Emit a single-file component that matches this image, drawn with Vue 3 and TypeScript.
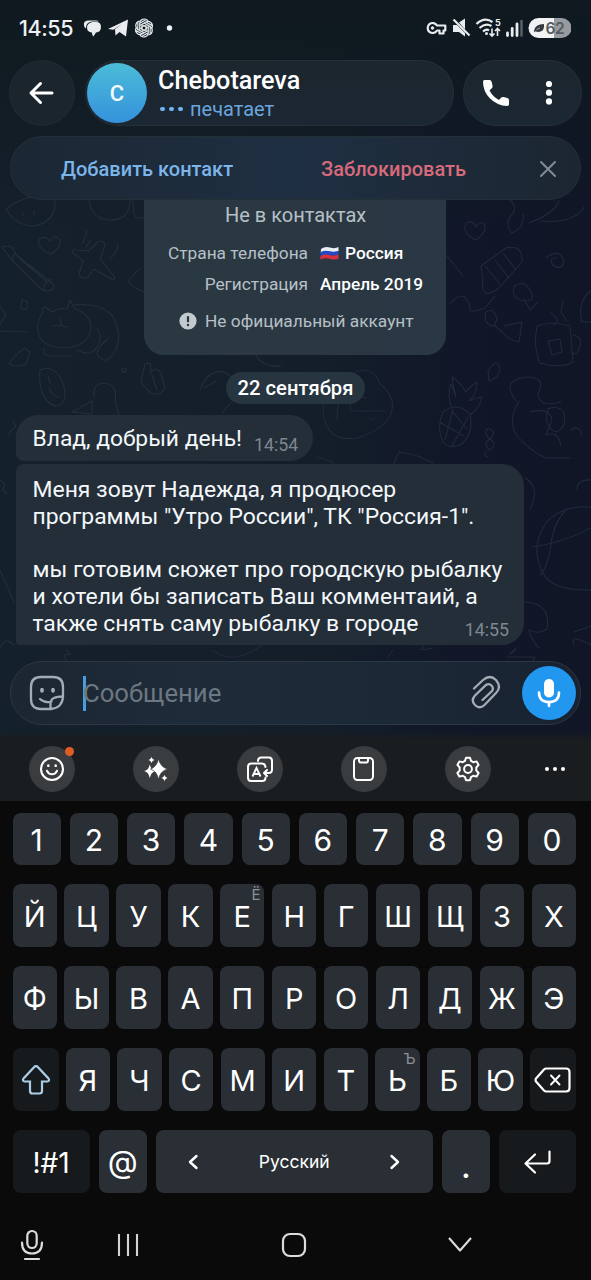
<script setup lang="ts">
interface Key { label: string; hint?: string }

const digits: string[] = [...'1234567890']
const rowTop: Key[] = [...'ЙЦУКЕНГШЩЗХ'].map((label) => ({ label, hint: label === 'Е' ? 'Ё' : undefined }))
const rowHome: Key[] = [...'ФЫВАПРОЛДЖЭ'].map((label) => ({ label }))
const rowBottom: Key[] = [...'ЯЧСМИТЬБЮ'].map((label) => ({ label, hint: label === 'Ь' ? 'Ъ' : undefined }))
const letterRows: Key[][] = [rowTop, rowHome]
const petals: number[] = [0, 60, 120, 180, 240, 300]
</script>

<template>
  <div class="phone">
    <svg class="wallpaper" viewBox="0 0 591 740" width="591" height="740" aria-hidden="true">
      <g>
        <!-- bowl and leaves -->
        <path d="M6 209q24-19 49-9q1 22-21 26q-18 0-28-17zM23 213v3M34 211v4M89 200q2 18 19 20q22 1 22-20M133 200q0 18 5 18h6" />
        <!-- heart -->
        <path d="M51 254C38 250 36 240 41 238q5-2 9 3q5-7 9-2q4 7-8 15z" />
        <!-- pencil -->
        <path d="M2 247l8-1q4 3 6 9l35 27q6 6 0 8q-6 3-12-3L12 260zM15 253l-3 7M18 257l28 24M44 291q-2-8 8-12" />
        <!-- plane -->
        <path d="M73 253q-2-4 3-3l12 1l10-9q6-3 7 3l-5 14l14 17q2 4-3 3l-17-10l-6 8q-7 3-9-3l4-13zM87 231l-4 12M90 241l-5 8M118 244q-1 10-8 14" />
        <!-- cat -->
        <path d="M38 330q-1-9 4-16q1-8 3-7l7 5q8-5 15-3l3-9l5 9q16 5 16 20q-3 18-27 19q-25-1-26-18zM53 325q3 2 8 0M60 319l2 7l6 1M74 305q24-3 38 10q12 22 2 38q-8 12-15 4q-6-7 9-18M44 348q-1 8 5 8h23M77 350q15 8 21-5q5-8-1-16" />
        <path d="M22 300q8 0 5 8q-6 5-6-3zM0 306l6 9l-6 9M0 331l27 1M30 352l-5-4q-11 7-16 16q9 4 17 0zM40 370q13-6 21 9q6 12 3 22q-6 9-16 1q-10-10-8-32zM49 388q4 9 10 9M48 376l2 7" />
        <path d="M145 364l-4 18l9 11q10 4 15-5l-3-12q-5-12-11-3l-1-10zM152 375l5 15M122 370a2 2 0 1 0 4 0a2 2 0 1 0-4 0M94 398q-2-14 10-15q14 2 11 18l4 14M92 401l-20 11l20 2z" />
        <path d="M200 390q8-21 24-18q13 4 11 26l-13 15M204 388l12-7M256 355q6 12 25 11M140 268l-12 13q5 7 16 11" />
        <path d="M13 421l3 6l-6 4l-1 4M0 480l5 4l-2 6l4 4M0 570l14 32M14 645q-10-10-14 4M66 649l4 5l-6 1l3 8l-5 3" />
      </g>
      <g class="cool">
        <!-- candle and ribbon -->
        <path d="M510 200q9 8 0 17q-5 9 2 16q13-5 11-19M529 223q26-10 30-22M540 221q34 3 44-14M476 240C463 235 463 224 468 222q6-1 8 5q6-8 9-1q1 7-9 14zM481 266l25-18q17-4 16 14l-24 27q-18 12-15-9zM486 267l14 17M495 260l14 18M503 253l13 17M450 304q13-17 20 2q-3 9 15 2l10-12M447 256l16 20" />
        <path d="M546 258q14-11 18 4q-3 9-11 3q-5-7 3-7M514 287q10-9 17 5q5 9-6 9q-14-2-11-14zM524 299l6 11l7-7M486 312q8-5 11 7q-3 8-5 7q-9-3-6-14zM504 326l18-4l-3 20q-10-2-17-10l-8-7" />
        <path d="M537 326q15-5 33 0l3 36q-12 7-33 1q-7-15-3-37zM573 335q12 2 5 16q-3 5-7 1M548 341l4 14l10-3l-2-13zM551 312l7 8l-4 5M563 300l-2 12l6 9M590 291q-13 12-8 31h9" />
        <!-- bear -->
        <path d="M323 410q1-22 28-26q-2-13 12-14q12 0 17 14q18 14 10 32q-9 15-33 22q-32 5-34-28zM337 420q-1-24 14-28l-1 19h35M348 400l18-3M368 417q4 5 7 0" />
        <!-- pineapple -->
        <path d="M451 406q-4-12 0-22l5 13q-3-10-4-20q9 6 14 15q4-6 11-10q0 12-8 19q7-3 13-4q-2 11-12 18M443 412q14-11 27 2q4 18-8 30q-12 6-19-2q-7-14 0-30zM441 423l23 13M452 411l15 18M445 440l8-31M452 446l16-29" />
        <path d="M488 371q10-15 12-2q-1 9-11 12zM516 401q-13-18 2-22q12-4 18 0q8 2 2 15q1 14 23 8M519 401q-12 20-2 35q14 16 29 22h24M530 412q20-5 22 8l-6 15q12-5 15 11M571 430q8-6 11 5M486 433q-1-5 4-4q7 4 0 10q-8 6 0 11q8-5 0-11q-4-3-4-6M486 451q-3 5 2 6M548 409q10-5 16 4q3 15-8 19q-13-5-8-23M317 457l16 5l8 13M393 466l6-14q19 2 34 11" />
        <!-- ball -->
        <path d="M591 507q-30-2-45 16q-16 24-4 48q8 20 49 19M567 509q-14 14-16 36q-4 24-11 30M532 547q28-3 59-19M577 490q0-11 14-10M525 478q16 9 5 31" />
        <path d="M525 602q26 1 22 27q-8 6-18 1q2 10 10 18M516 648q-12 12-1 2M574 632l17-6M591 645q-22-12-17 0M433 648q-18 4-9-2M507 657h28l-3 5M213 650q20 17 49-5M388 657l5-7" />
      </g>
    </svg>

    <header class="status">
      <span class="clock">14:55</span>
      <svg class="status-left" viewBox="0 0 94 26" width="94" height="26">
        <path d="M1 9.500Q0 4.500 6 4.500h7q2 0 2.500 1H9q-5 .5-5.700 4.500L3 12.500Q1.200 11.500 1 9.500z" fill="#e9edf0" />
        <path d="M9.500 6h3.500q5 0 5 5t-5 5.500q-1 1.500-2.600 4q-1.400-1.500-1.600-4Q4 16 4 11.500T9.500 6z" fill="#e9edf0" />
        <path d="M25 13L45 3.500l-2 17-6.500-4.500-4 3.500-.5-6.200L39 8l-8.500 5.800z" fill="#e9edf0" />
        <g transform="translate(61 12)" fill="none" stroke="#e2e7e9" stroke-width="1.200">
          <path v-for="a in petals" :key="a" :transform="`rotate(${a})`" d="M-4.300 2.500V-4.700a4.500 4.500 0 0 1 7.600-3l.7.700M-4.300-4.700L1.600-8M-4.300-.2L1.200 3" />
        </g>
        <circle cx="86.500" cy="12" r="2.700" fill="#f0f3f5" />
      </svg>
      <svg class="status-right" viewBox="0 0 146 24" width="146" height="24">
        <g fill="none" stroke="#e8ecee" stroke-width="2.200">
          <path d="M12 9.500A5 5 0 1 0 12 14.500h2.500v3h4v-3h1.800V9.500z" stroke-linejoin="round" />
          <circle cx="7.500" cy="12" r="1.300" fill="#e8ecee" stroke-width="1" />
        </g>
        <path d="M34 6.500l6-4v11zM28 9h4l8 8v3.500l-6-4.500h-6z" fill="#e8ecee" />
        <path d="M28.500 3.500l16 16" stroke="#e8ecee" stroke-width="2.200" />
        <g fill="none" stroke="#e8ecee" stroke-width="2.200">
          <path d="M51.500 8q8-7.500 16-2M54.500 12q6-5.500 12-2M58 15.500q3.500-3 6-1" />
          <path d="M67 12.500v7.500m-2.500-2.500l2.500 2.500l2.500-2.500M72.500 20v-7.500m-2.500 2.500l2.500-2.500l2.500 2.500" stroke-width="1.600" />
        </g>
        <circle cx="61.500" cy="17.500" r="1.500" fill="#e8ecee" />
        <text x="70" y="10" class="tiny">5</text>
        <path d="M82.500 19.500v-2.500M87.200 19.500v-7M92 19.500V8" stroke="#e8ecee" stroke-width="2.800" stroke-linecap="round" />
        <path d="M96.500 20.500V4" stroke="#5b6369" stroke-width="2.400" />
        <path d="M113.500 2H129v20h-15.500a10 10 0 0 1 0-20z" fill="#f0f2f3" />
        <path d="M129 2h7.500a10 10 0 0 1 0 20H129z" fill="#979b9f" />
        <path d="M109 15q1-7 10-7q1 7.500-5.500 8q-2 0-3-.7l-1.500 1z" fill="#32383c" />
        <path d="M111.500 13.800l3.500-2" stroke="#ddd" stroke-width=".7" />
        <text x="120.500" y="17.700" class="battery">62</text>
      </svg>
    </header>

    <nav class="topbar">
      <button class="glass back" aria-label="Назад">
        <svg viewBox="0 0 30 30" width="30" height="30"><path d="M25 15H4.500M13.500 5.500L4 15l9.500 9.500" fill="none" stroke="#fff" stroke-width="3" stroke-linecap="round" stroke-linejoin="round" /></svg>
      </button>
      <div class="glass person">
        <div class="avatar">C</div>
        <div class="who">
          <div class="name">Chebotareva</div>
          <div class="typing"><span class="dots"><i /><i /><i /></span><span>печатает</span></div>
        </div>
      </div>
      <div class="glass tools">
        <svg viewBox="0 0 26 26" width="26" height="26"><path d="M1.500 0H6.500Q8.300 0 8.700 2L9.600 6Q9.800 7.500 8.500 8.600L6.500 10.500Q10 17 16 20l2-2.200q1-1 2.500-.8l3.800.9q1.700.4 1.700 2.100v4.200q0 1.800-1.800 1.800Q14 25.500 6.800 18.200Q0 11 0 1.700Q0 0 1.500 0z" fill="#fff" /></svg>
        <svg viewBox="0 0 8 26" width="8" height="26" fill="#fff"><circle cx="4" cy="4" r="3.100" /><circle cx="4" cy="12.700" r="3.100" /><circle cx="4" cy="21.400" r="3.100" /></svg>
      </div>
    </nav>

    <div class="glass actions">
      <span class="add">Добавить контакт</span>
      <span class="block">Заблокировать</span>
      <svg viewBox="0 0 18 18" width="18" height="18"><path d="M2 2l14 14M16 2L2 16" stroke="#7f8b96" stroke-width="2" stroke-linecap="round" /></svg>
    </div>

    <main class="chat">
      <section class="card">
        <div class="card-title"><span>Не в контактах</span></div>
        <div class="fact"><span class="term">Страна телефона</span>
          <svg class="flag" viewBox="0 0 19 14" width="19" height="14">
            <path d="M1 3Q5 0 10 1.500T18.500 1v4.300Q14 6.500 9.500 5.500T.7 7z" fill="#e9eef2" />
            <path d="M.7 6Q5 4 9.500 5.200T18.500 5v4Q14 10 9.500 9T.4 10.500z" fill="#2348c8" />
            <path d="M.5 10Q5 7.800 9.500 9T18.500 8.700v4Q14 14 9.500 12.800T.2 13.500z" fill="#d8303c" />
          </svg>
          <b>Россия</b></div>
        <div class="fact second"><span class="term">Регистрация</span><b>Апрель 2019</b></div>
        <div class="warning">
          <svg viewBox="0 0 18 18" width="18" height="18"><circle cx="9" cy="9" r="8.600" fill="#c4cbd0" /><path d="M9 4.200v6" stroke="#2a3740" stroke-width="2.200" /><circle cx="9" cy="13" r="1.200" fill="#2a3740" /></svg>
          <span>Не официальный аккаунт</span>
        </div>
      </section>
      <div class="date"><span>22 сентября</span></div>
      <article class="bubble first"><span>Влад, добрый день!</span><time>14:54</time></article>
      <article class="bubble second-msg">
        <p><span>Меня зовут Надежда, я продюсер</span><br><span>программы "Утро России", ТК "Россия-1".</span><br><br><span>мы готовим сюжет про городскую рыбалку</span><br><span>и хотели бы записать Ваш комментаий, а</span><br><span>также снять саму рыбалку в городе</span></p>
        <time>14:55</time>
      </article>
    </main>

    <div class="composer">
      <svg class="sticker" viewBox="0 0 36 36" width="36" height="36" fill="none" stroke="#a3acb5" stroke-width="2.300">
        <path d="M22 34H12Q2 34 2 24V12Q2 2 12 2h12Q34 2 34 12v10Q33 33 22 34z" />
        <path d="M34 21.500q-6 0-9 1.500q-3.500 1.500-3.500 6V34M11 24q5 4.500 11.500 2.500" stroke-linecap="round" />
        <path d="M13 14.500v1.500M24 14.500v1.500" stroke-width="3.600" stroke-linecap="round" />
      </svg>
      <span class="caret" />
      <span class="placeholder">Сообщение</span>
      <svg class="clip" viewBox="0 0 32 36" width="32" height="36"><path d="M3 13.500L12 5q7-6 13 0q6 7 0 13L13.500 30q-5 4.500-9.500 0t0-9.500L15 10q3-2 5.500.5T21 16L11.500 25" fill="none" stroke="#a3acb5" stroke-width="2.300" stroke-linecap="round" /></svg>
      <div class="mic">
        <svg viewBox="0 0 24 30" width="24" height="30"><rect x="7" y="1" width="10" height="18.500" rx="5" fill="#fff" /><path d="M2 14.500q0 9.500 10 9.500t10-9.500M12 24v4" fill="none" stroke="#fff" stroke-width="2.600" stroke-linecap="round" /></svg>
      </div>
    </div>

    <section class="suggest">
      <div class="round">
        <svg viewBox="0 0 26 26" width="26" height="26" fill="none" stroke="#fff" stroke-width="2.100"><circle cx="13" cy="13" r="11" /><path d="M8 14.800q1.500 3.400 5 3.400t5-3.400" stroke-linecap="round" /><path d="M9.300 9.500v.4M16.700 9.500v.4" stroke-width="2.400" stroke-linecap="round" /></svg>
        <i class="notice" />
      </div>
      <div class="round">
        <svg viewBox="0 0 26 26" width="26" height="26" fill="#fff"><path d="M6.800 8.500q1.200 5.500 5.700 6.500q-4.500 1.200-5.700 7q-1.200-5.800-5.500-7q4.300-1 5.500-6.500zM8.500 1q.7 2.500 3 3q-2.300.5-3 3q-.7-2.500-3-3q2.300-.5 3-3zM21.500 19q.7 2.500 3 3q-2.300.5-3 3q-.7-2.500-3-3q2.300-.5 3-3z" /><path d="M15.500 3q1.900 8 9 10q-7.100 2-9 10Q13.600 15 7.500 13q6.100-2 8-10z" stroke="#3a3d3f" stroke-width=".7" /></svg>
      </div>
      <div class="round">
        <svg viewBox="0 0 28 28" width="28" height="28" fill="none" stroke="#fff" stroke-width="2"><path d="M12 6q0-3.500 3.500-3.500h7.500Q26 2.500 26 6v8.500q0 3.500-3.500 3.500H18m3-3l-3 3l3 3" stroke-linecap="round" stroke-linejoin="round" /><path d="M19.500 12Q19 8.500 16 8.500H5Q2 8.500 2 12v10.500Q2 26 5 26h11q3.500 0 3.500-3.500" stroke-linecap="round" /><path d="M6.500 21.500l4-8.500l4 8.500M8 19h5" stroke-width="1.900" /></svg>
      </div>
      <div class="round">
        <svg viewBox="0 0 24 26" width="24" height="26" fill="none" stroke="#fff" stroke-width="2"><rect x="2" y="2" width="19" height="22" rx="3.500" /><path d="M7 2v2.500q0 2 2 2h5q2 0 2-2V2" /></svg>
      </div>
      <div class="round">
        <svg viewBox="0 0 26 26" width="26" height="26" fill="none" stroke="#fff" stroke-width="2" stroke-linejoin="round"><path d="M11 1.700h4l1 3.200l2.200 1.300l3.400-.8l2 3.500L21.300 11.500v3l2.300 2.500l-2 3.600l-3.400-.8L16 21.100l-1 3.200h-4l-1-3.200l-2.200-1.300l-3.400.8l-2-3.600l2.300-2.500v-3L2.400 8.900l2-3.500l3.400.8L10 4.900z" /><circle cx="13" cy="13" r="3.900" /></svg>
      </div>
      <svg class="more" viewBox="0 0 22 6" width="22" height="6" fill="#fff"><circle cx="3" cy="3" r="2" /><circle cx="11" cy="3" r="2" /><circle cx="19" cy="3" r="2" /></svg>
    </section>

    <section class="keyboard">
      <div class="row numbers"><button v-for="d in digits" :key="d" class="key">{{ d }}</button></div>
      <div v-for="(row, i) in letterRows" :key="i" class="row letters">
        <button v-for="k in row" :key="k.label" class="key"><span>{{ k.label }}</span><sup v-if="k.hint">{{ k.hint }}</sup></button>
      </div>
      <div class="row lower">
        <button class="key dark" aria-label="Shift"><svg viewBox="0 0 30 32" width="30" height="32"><path d="M15 2.200q1.200 0 2 1L27.500 14.500q1.500 2.500-1 3H21V27q0 2.500-2.500 2.500h-7Q9 29.500 9 27v-9.500H3.500q-2.500-.5-1-3L13 3.200q.8-1 2-1z" fill="none" stroke="#a9cfe8" stroke-width="2.200" /></svg></button>
        <button v-for="k in rowBottom" :key="k.label" class="key"><span>{{ k.label }}</span><sup v-if="k.hint">{{ k.hint }}</sup></button>
        <button class="key dark" aria-label="Backspace"><svg viewBox="0 0 38 28" width="38" height="28" fill="none" stroke="#fff" stroke-width="2.200" stroke-linecap="round" stroke-linejoin="round"><path d="M12.500 2.500H32q3.500 0 3.500 3.500v16q0 3.500-3.500 3.500H12.500q-1.500 0-2.500-1L2 15.500Q1 14 2 12.500L10 3.500q1-1 2.500-1z" /><path d="M17 9.500l8.500 9M25.500 9.500l-8.500 9" stroke-width="1.900" /></svg></button>
      </div>
      <div class="row bottom">
        <button class="key dark sym">!#1</button>
        <button class="key at">@</button>
        <div class="key space">
          <svg viewBox="0 0 12 18" width="12" height="18"><path d="M9.500 3L3 9l6.500 6" /></svg>
          <span>Русский</span>
          <svg viewBox="0 0 12 18" width="12" height="18"><path d="M2.500 3L9 9l-6.500 6" /></svg>
        </div>
        <button class="key dot" aria-label="Точка"><span>.</span></button>
        <button class="key dark" aria-label="Ввод"><svg viewBox="0 0 30 26" width="30" height="26"><path d="M26.500 2.500V12q0 2.500-2.500 2.500H3M12 5.500l-9.500 9l9.500 9" fill="none" stroke="#fff" stroke-width="2.200" stroke-linecap="round" stroke-linejoin="round" /></svg></button>
      </div>
      <footer class="system">
        <svg class="voice" viewBox="0 0 24 32" width="24" height="32" fill="none" stroke="#dcdcdc" stroke-width="2.200"><rect x="7.300" y="2" width="9.400" height="17" rx="4.700" /><path d="M2 13.500q0 11 10 11t10-11M5 30h14" stroke-linecap="round" /></svg>
        <svg class="recents" viewBox="0 0 22 24" width="22" height="24" stroke="#d4d4d4" stroke-width="2.100"><path d="M2 1v22M11 1v22M20 1v22" /></svg>
        <svg class="home" viewBox="0 0 26 26" width="26" height="26" fill="none" stroke="#dcdcdc" stroke-width="2.200"><rect x="2" y="2" width="22" height="22" rx="7" /></svg>
        <svg class="down" viewBox="0 0 26 18" width="26" height="18" fill="none" stroke="#dcdcdc" stroke-width="2.100"><path d="M2 2l11 12.500L24 2" stroke-linejoin="round" /></svg>
      </footer>
    </section>
  </div>
</template>

<style>
body { margin: 0; background: #0a0a0a; }
</style>

<style scoped>
* { box-sizing: border-box; }
svg { display: block; flex: none; }
span, b, time { white-space: nowrap; }
.phone {
  position: relative; width: 591px; height: 1280px; overflow: hidden; display: flex; flex-direction: column;
  background: linear-gradient(#0f191f 0, rgba(15, 25, 31, 0) 230px), linear-gradient(90deg, #14202b 0, #131e29 55%, #111728 78%, #111627 100%);
  font-family: Roboto, "Noto Sans", sans-serif; color: #fff;
}
.wallpaper { position: absolute; inset: 0 auto auto 0; fill: none; stroke: #25313a; stroke-width: 1.1; stroke-linecap: round; stroke-linejoin: round; opacity: .95; }
.wallpaper .cool { stroke: #232b3c; }
.phone > :not(.wallpaper) { position: relative; flex: none; }
button { border: 0; padding: 0; margin: 0; color: inherit; font: inherit; }

.status { height: 60px; display: flex; align-items: flex-start; padding: 0 20px 0 19px; }
.clock { font: 500 21.500px/28px Inter, sans-serif; margin-top: 14px; color: #eef1f3; width: 64px; letter-spacing: -.4px; }
.status-left { margin-top: 16px; }
.status-right { margin: 16px 0 0 auto; }
.tiny { font: 700 9px Inter, sans-serif; fill: #e8ecee; }
.battery { font: 600 15.500px Inter, sans-serif; fill: #555b60; letter-spacing: -.5px; }

.glass { background: linear-gradient(#1c262e, #1b2733); border: 1px solid #242f38; }
.topbar { height: 66px; padding: 0 9px; display: flex; }
.back { width: 66px; height: 66px; border-radius: 50%; display: grid; place-items: center; background: #1b252d; border-color: #202b33; }
.person { width: 369px; margin-left: 10px; border-radius: 33px; display: flex; padding: 2px 0 0 1px; }
.avatar { width: 60px; height: 60px; border-radius: 50%; background: linear-gradient(#4bbcd8, #3592dc); display: grid; place-items: center; font-size: 22px; font-weight: 500; color: #f3fbff; }
.who { margin-left: 11px; }
.name { font-size: 25.200px; font-weight: 500; line-height: 30px; margin-top: 3px; }
.typing { display: flex; font-size: 20px; line-height: 24px; color: #6ba5dd; margin-top: 1px; }
.dots { display: flex; gap: 4.500px; align-items: center; width: 32px; padding-left: 2px; }
.dots i { width: 4.500px; height: 4.500px; border-radius: 50%; background: #72b5f2; }
.tools { width: 119px; margin-left: 9px; border-radius: 33px; display: flex; align-items: center; padding-left: 19px; gap: 36px; }
.actions { height: 64px; margin: 10px 10px 0; border-radius: 32px; display: flex; align-items: center; background: linear-gradient(90deg, #1b2733, #1f2f42 50%, #1b2631); font-size: 20px; font-weight: 500; }
.add, .block { padding-top: 2px; }
.add { color: #7bb5ea; width: 260px; padding-left: 50px; }
.block { color: #d76a7b; width: 218px; padding-left: 50px; }
.actions svg { margin: 1px 0 0 50px; }

.chat { height: 445px; }
.card { width: 302px; height: 155px; margin-left: 144px; border-radius: 0 0 20px 20px; background: linear-gradient(90deg, #2a3841, #2a3744); color: #b7c0c7; font-size: 17.300px; }
.card-title { font-size: 20px; line-height: 24px; padding: 3px 0 0 81px; }
.fact { display: flex; align-items: center; height: 24px; margin-top: 14px; }
.fact.second { margin-top: 7px; }
.fact .term { width: 164px; margin-right: 12px; text-align: right; }
.fact b { font-weight: 500; color: #fff; }
.flag { margin-right: 6px; }
.warning { display: flex; align-items: center; height: 24px; margin-top: 13px; padding-left: 35px; gap: 8px; }
.date { width: 139px; height: 32px; margin: 17px 0 0 226px; border-radius: 16px; background: #263540; font-size: 20.200px; font-weight: 500; line-height: 32px; text-align: center; }
.bubble { background: #232e39; color: #f4f8fb; }
.first { width: 297px; height: 46px; margin: 11px 0 0 16px; border-radius: 22px 23px 23px 8px; padding-left: 16.500px; display: flex; font-size: 22.800px; line-height: 47px; }
.bubble time { font-size: 17.800px; color: #7d8790; }
.first time { margin: 6px 0 0 12px; }
.second-msg { width: 508px; height: 181px; margin: 3px 0 0 16px; border-radius: 8px 22px 22px 4px; padding: 13px 0 0 16.500px; }
.second-msg p { margin: 0; font-size: 22.920px; line-height: 26.800px; }
.second-msg time { display: block; margin: -18px 15px 0 0; line-height: 20px; text-align: right; }

.composer { height: 64px; margin: 16px 10px 0; border-radius: 32px; border: 1px solid #2c3743; background: linear-gradient(90deg, #1b2631, #1e2b39 30%, #1b2836 70%, #182230); display: flex; align-items: center; }
.sticker { margin-left: 18px; }
.caret { width: 3px; height: 35px; background: #4b9cdf; margin-left: 18px; }
.placeholder { font-size: 25.700px; color: #6d7781; margin-left: -3px; }
.clip { margin-left: auto; }
.mic { width: 54px; height: 54px; border-radius: 50%; background: #2197f0; margin: 0 4px 0 19px; display: grid; place-items: center; }

.suggest { height: 61px; margin-top: 15px; background: #1a1d1f; display: flex; align-items: center; padding: 0 0 3px 29px; gap: 58px; }
.suggest::before { content: ""; position: absolute; inset: -9px 0 auto; height: 9px; background: linear-gradient(rgba(26, 29, 31, 0), #1a1d1f); }
.round { position: relative; width: 46px; height: 46px; border-radius: 50%; background: #3a3d3f; display: grid; place-items: center; flex: none; }
.notice { position: absolute; right: 1px; top: 1px; width: 9px; height: 9px; border-radius: 50%; background: #e05c25; }
.more { margin-left: -5px; }

.keyboard { height: 479px; background: #0a0a0b; padding: 12px 15px 0 12.500px; font-family: Inter, sans-serif; }
.row { display: grid; height: 63px; margin-bottom: 19px; }
.key { position: relative; border-radius: 8px; background: #292f35; display: grid; place-items: center; font-size: 29px; line-height: 36px; color: #fff; }
.key.dark { background: #171a1d; }
.numbers { height: 52px; grid-template-columns: repeat(10, 1fr); gap: 9px; }
.numbers .key { font-size: 30px; padding-top: 2px; }
.letters { grid-template-columns: repeat(11, 1fr); gap: 7.600px; }
.letters .key, .lower .key:not(.dark) { padding-top: 3px; }
.key sup { position: absolute; right: 4px; top: 3px; font-size: 15px; line-height: 16px; color: #8c9196; }
.lower { grid-template-columns: 46px repeat(9, 1fr) 46px; gap: 7.300px; }
.bottom { grid-template-columns: 77px 48.500px 1fr 48.500px 77px; gap: 9px; margin: 0; }
.sym { font-size: 28px; padding-top: 2px; }
.at { font-size: 31px; }
.space { display: flex; align-items: center; justify-content: space-between; padding: 0 31px; font-size: 17.500px; }
.space svg { fill: none; stroke: #fff; stroke-width: 2.4; stroke-linecap: round; stroke-linejoin: round; }
.dot span { padding-top: 12px; font-weight: 600; }
.system { height: 86px; display: flex; align-items: center; padding-top: 18px; }
.voice { margin-left: 7px; }
.recents { margin-left: 73px; }
.home { margin-left: 142px; }
.down { margin-left: 140px; }
</style>
